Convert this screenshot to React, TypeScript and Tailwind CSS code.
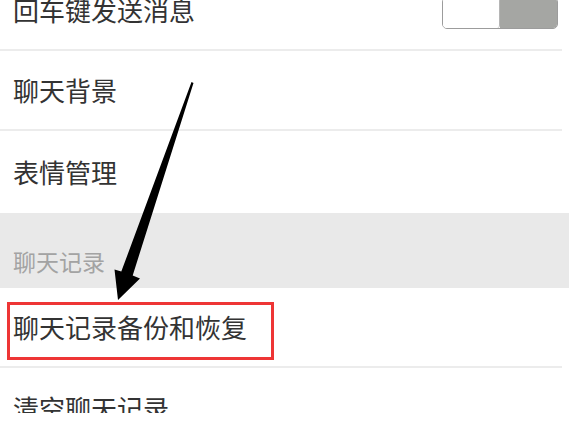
import React from "react";

const font = { fontFamily: '"Noto Sans CJK SC", "Noto Sans", sans-serif' };

const Divider = () => <div className="h-[2px] w-[562px] bg-[#ececec]" />;

const Row: React.FC<{ label: string; h?: string; children?: React.ReactNode }> = ({
  label,
  h = "h-[78px]",
  children,
}) => (
  <div className={`relative flex ${h} w-[562px] items-center justify-between pl-[13px]`}>
    <span className="text-[26px] leading-none text-[#333333]">{label}</span>
    {children}
  </div>
);

const Toggle = () => (
  <div className="mr-[4px] mt-[6px] flex h-[32px] w-[116px] overflow-hidden rounded-[5px] border border-[#9c9c9c]">
    <div className="h-full w-[57px] rounded-r-[3px] border-r border-[#b5b5b5] bg-white" />
    <div className="h-full flex-1 bg-[#a5a6a3]" />
  </div>
);

const Arrow = () => (
  <svg className="pointer-events-none absolute left-0 top-0" width="585" height="439" viewBox="0 0 585 439">
    <polygon
      points="191.5,82 193.5,83 132.7,275.4 140,278.5 118,300 114.5,269.5 121.3,271.6"
      fill="#000000"
    />
  </svg>
);

export default function App() {
  return (
    <div className="relative h-[439px] w-[585px] overflow-hidden bg-white" style={font}>
      <div className="h-[413px] overflow-hidden">
        <div className="-mt-[29px]">
          <Row label="回车键发送消息">
            <Toggle />
          </Row>
          <Divider />
          <Row label="聊天背景" />
          <Divider />
          <Row label="表情管理" h="h-[82px]" />
          <div className="flex h-[75px] w-[569px] items-end bg-[#e9e9e9] pb-[15px] pl-[13px]">
            <span className="text-[23px] leading-none text-[#a3a3a3]">聊天记录</span>
          </div>
          <Row label="聊天记录备份和恢复">
            <div className="absolute left-[7px] top-[14px] h-[58px] w-[267px] border-[3px] border-[#ee3535]" />
          </Row>
          <Divider />
          <Row label="清空聊天记录" h="h-[80px]" />
        </div>
      </div>
      <Arrow />
    </div>
  );
}
